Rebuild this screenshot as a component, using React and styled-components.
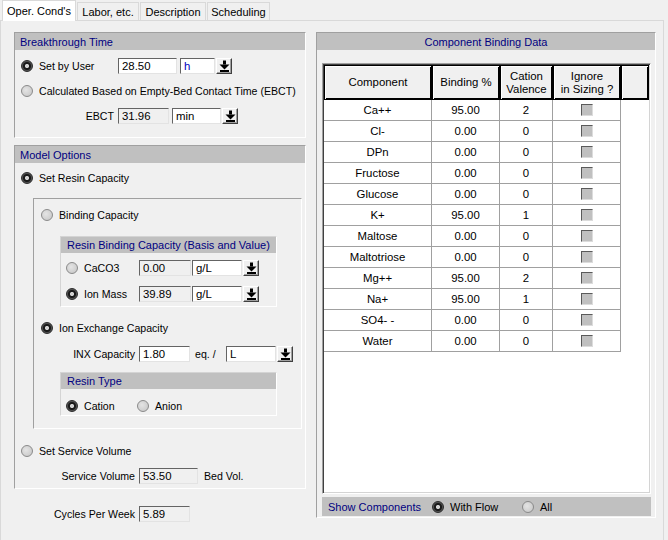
import React from "react";
import styled, { createGlobalStyle } from "styled-components";

const GlobalStyle = createGlobalStyle`
  body {
    margin: 0;
    background: #f0f0f0;
    font-family: "Liberation Sans", Arial, sans-serif;
    font-size: 10.6px;
    color: #000;
  }
`;

const Window = styled.div`
  width: 668px;
  height: 540px;
  display: flex;
  flex-direction: column;
  overflow: hidden;
`;

const TabStrip = styled.div`
  height: 20px;
  display: flex;
  align-items: flex-end;
  padding-left: 2px;
  position: relative;
  z-index: 1;
`;

const Tab = styled.div`
  width: ${(p) => p.$w}px;
  height: ${(p) => (p.$active ? 21 : 18)}px;
  margin-bottom: ${(p) => (p.$active ? -1 : 0)}px;
  margin-left: ${(p) => (p.$active ? 0 : 1)}px;
  box-sizing: border-box;
  display: flex;
  align-items: center;
  justify-content: center;
  background: ${(p) => (p.$active ? "#fff" : "#f0f0f0")};
  border: 1px solid #d9d9d9;
  border-bottom: none;
  padding-top: ${(p) => (p.$active ? 0 : 1)}px;
  font-size: 11px;
`;

const Page = styled.div`
  width: 664px;
  flex: 1;
  box-sizing: border-box;
  border: 1px solid #d9d9d9;
  border-bottom: none;
  display: flex;
  gap: 10px;
  padding: 11px 0 0 13px;
`;

const LeftCol = styled.div`
  width: 292px;
  display: flex;
  flex-direction: column;
`;

const GroupBox = styled.div`
  border: 1px solid;
  border-color: #a0a0a0 #fff #fff #a0a0a0;
  margin-top: ${(p) => p.$mt || 0}px;
  padding-bottom: ${(p) => p.$pb || 0}px;
  display: flex;
  flex-direction: column;
`;

const GroupHeader = styled.div`
  height: 17px;
  background: #c0c0c0;
  color: #000080;
  display: flex;
  align-items: center;
  padding-left: 5px;
  font-size: 11px;
`;

const GroupBody = styled.div`
  display: flex;
  flex-direction: column;
  padding-left: 6px;
`;

const InnerBox = styled.div`
  margin: 12px 3px 0 12px;
  border: 1px solid;
  border-color: #a0a0a0 #fff #fff #a0a0a0;
  padding: 8px 0 12px 7px;
  display: flex;
  flex-direction: column;
`;

const SubBox = styled.div`
  width: 217px;
  box-sizing: border-box;
  margin: ${(p) => p.$mt}px 0 0 19px;
  border: 1px solid;
  border-color: #d4d4d4 #fff #fff #d4d4d4;
  padding-bottom: ${(p) => p.$pb}px;
  display: flex;
  flex-direction: column;
`;

const SubHeader = styled.div`
  height: 16px;
  background: #c0c0c0;
  color: #000080;
  display: flex;
  align-items: center;
  padding-left: 6px;
  font-size: 11px;
`;

const SubBody = styled.div`
  display: flex;
  flex-direction: column;
  padding-left: 5px;
`;

const Row = styled.div`
  display: flex;
  align-items: center;
  height: 16px;
  margin-top: ${(p) => p.$mt || 0}px;
`;

const Radio = styled.span`
  width: 12px;
  height: 12px;
  flex: none;
  box-sizing: border-box;
  border-radius: 50%;
  margin-right: 6px;
  border: 1px solid ${(p) => (p.$checked ? "#2a2a2a" : "#8a8a8a")};
  background: ${(p) =>
    p.$checked
      ? "radial-gradient(circle, #d2d2d2 0 1.6px, #1a1a1a 2.5px 3.6px, #555 4.6px)"
      : "radial-gradient(circle at 40% 40%, #e4e4e4, #c4c4c4)"};
`;

const Text = styled.span`
  flex: none;
  white-space: nowrap;
  width: ${(p) => (p.$w ? `${p.$w}px` : "auto")};
  text-align: ${(p) => (p.$right ? "right" : "left")};
  padding-right: ${(p) => (p.$right ? 4 : 0)}px;
  margin-left: ${(p) => p.$ml || 0}px;
  box-sizing: border-box;
  color: ${(p) => p.$color || "#000"};
`;

const Field = styled.div`
  width: ${(p) => p.$w}px;
  height: 16px;
  flex: none;
  box-sizing: border-box;
  margin-left: ${(p) => p.$ml || 0}px;
  border: 1px solid;
  border-color: #646464 #e3e3e3 #e3e3e3 #646464;
  background: ${(p) => (p.$disabled ? "#f0f0f0" : "#fff")};
  color: ${(p) => p.$color || "#000"};
  padding-left: 3px;
  display: flex;
  align-items: center;
  font-size: 11.4px;
`;

const ArrowBtn = styled.div`
  width: 16px;
  height: 16px;
  flex: none;
  box-sizing: border-box;
  margin-left: 1px;
  border: 1px solid;
  border-color: #fff #404040 #404040 #fff;
  box-shadow: inset -1px -1px #a0a0a0;
  background: #f0f0f0;
  display: flex;
  align-items: center;
  justify-content: center;
`;

const RightPanel = styled.div`
  width: 340px;
  height: 486px;
  box-sizing: border-box;
  border: 1px solid;
  border-color: #a0a0a0 #fff #fff #a0a0a0;
  display: flex;
  flex-direction: column;
`;

const PanelHeader = styled(GroupHeader)`
  justify-content: center;
  padding-left: 0;
`;

const GridBox = styled.div`
  margin: 13px 4px 0 5px;
  height: 431px;
  box-sizing: border-box;
  border: 1px solid;
  border-color: #a0a0a0 #fff #fff #a0a0a0;
  box-shadow: inset 1px 1px #404040, inset -1px -1px #d4d4d4;
  background: #fff;
  padding: 1px;
  display: grid;
  grid-template-columns: 108px 68px 53px 68px 1fr;
  grid-auto-rows: 21px;
  grid-template-rows: 35px;
  align-content: start;
`;

const HeadCell = styled.div`
  box-sizing: border-box;
  background: #f0f0f0;
  border: 1px solid #000;
  box-shadow: inset 1px 1px #fff, inset -1px -1px #000;
  display: flex;
  align-items: center;
  justify-content: center;
  text-align: center;
  line-height: 13px;
  font-size: 11.4px;
`;

const Cell = styled.div`
  box-sizing: border-box;
  border-right: ${(p) => (p.$blank ? "none" : "1px solid #a0a0a0")};
  border-bottom: ${(p) => (p.$blank ? "none" : "1px solid #a0a0a0")};
  display: flex;
  align-items: center;
  justify-content: center;
  font-size: 11.4px;
`;

const CheckBox = styled.span`
  width: 12px;
  height: 12px;
  box-sizing: border-box;
  border: 1px solid;
  border-color: #5a5a5a #dcdcdc #dcdcdc #5a5a5a;
  background: #c0c0c0;
`;

const BottomBar = styled.div`
  margin: 3px 4px 0 5px;
  height: 19px;
  background: #c0c0c0;
  display: flex;
  align-items: center;
  padding-left: 6px;
  font-size: 11px;
`;

const DownArrow = () => (
  <svg width="11" height="12" viewBox="0 0 11 12">
    <rect x="4" y="0.5" width="3" height="4" fill="#000" />
    <polygon points="0.5,4.5 10.5,4.5 5.5,9.5" fill="#000" />
    <rect x="1" y="10" width="9" height="2" fill="#000" />
  </svg>
);

const Combo = ({ w, value, ml, color }) => (
  <>
    <Field $w={w} $ml={ml} $color={color}>
      {value}
    </Field>
    <ArrowBtn>
      <DownArrow />
    </ArrowBtn>
  </>
);

const components = [
  ["Ca++", "95.00", "2"],
  ["Cl-", "0.00", "0"],
  ["DPn", "0.00", "0"],
  ["Fructose", "0.00", "0"],
  ["Glucose", "0.00", "0"],
  ["K+", "95.00", "1"],
  ["Maltose", "0.00", "0"],
  ["Maltotriose", "0.00", "0"],
  ["Mg++", "95.00", "2"],
  ["Na+", "95.00", "1"],
  ["SO4- -", "0.00", "0"],
  ["Water", "0.00", "0"],
];

export default function App() {
  return (
    <Window>
      <GlobalStyle />
      <TabStrip>
        <Tab $active $w={74}>Oper. Cond's</Tab>
        <Tab $w={62}>Labor, etc.</Tab>
        <Tab $w={66}>Description</Tab>
        <Tab $w={63}>Scheduling</Tab>
      </TabStrip>
      <Page>
        <LeftCol>
          <GroupBox $pb={13}>
            <GroupHeader>Breakthrough Time</GroupHeader>
            <GroupBody>
              <Row $mt={8}>
                <Radio $checked />
                <Text $w={79}>Set by User</Text>
                <Field $w={59}>28.50</Field>
                <Combo w={35} ml={3} value="h" color="#0000c0" />
              </Row>
              <Row $mt={9}>
                <Radio />
                <Text>Calculated Based on Empty-Bed Contact Time (EBCT)</Text>
              </Row>
              <Row $mt={9}>
                <Text $w={97} $right>EBCT</Text>
                <Field $w={51} $disabled>31.96</Field>
                <Combo w={49} ml={3} value="min" />
              </Row>
            </GroupBody>
          </GroupBox>

          <GroupBox $mt={7} $pb={4}>
            <GroupHeader>Model Options</GroupHeader>
            <GroupBody>
              <Row $mt={7}>
                <Radio $checked />
                <Text>Set Resin Capacity</Text>
              </Row>
              <InnerBox>
                <Row>
                  <Radio />
                  <Text>Binding Capacity</Text>
                </Row>
                <SubBox $mt={13} $pb={4}>
                  <SubHeader>Resin Binding Capacity (Basis and Value)</SubHeader>
                  <SubBody>
                    <Row $mt={7}>
                      <Radio />
                      <Text $w={55}>CaCO3</Text>
                      <Field $w={52} $disabled>0.00</Field>
                      <Combo w={50} ml={1} value="g/L" />
                    </Row>
                    <Row $mt={10}>
                      <Radio $checked />
                      <Text $w={55}>Ion Mass</Text>
                      <Field $w={52} $disabled>39.89</Field>
                      <Combo w={50} ml={1} value="g/L" />
                    </Row>
                  </SubBody>
                </SubBox>
                <Row $mt={13}>
                  <Radio $checked />
                  <Text>Ion Exchange Capacity</Text>
                </Row>
                <Row $mt={10}>
                  <Text $w={98} $right>INX Capacity</Text>
                  <Field $w={51}>1.80</Field>
                  <Text $w={31} $ml={5}>eq. /</Text>
                  <Combo w={50} value="L" />
                </Row>
                <SubBox $mt={10} $pb={1}>
                  <SubHeader>Resin Type</SubHeader>
                  <SubBody>
                    <Row $mt={9}>
                      <Radio $checked />
                      <Text $w={53}>Cation</Text>
                      <Radio />
                      <Text>Anion</Text>
                    </Row>
                  </SubBody>
                </SubBox>
              </InnerBox>
              <Row $mt={14}>
                <Radio />
                <Text>Set Service Volume</Text>
              </Row>
              <Row $mt={9}>
                <Text $w={118} $right>Service Volume</Text>
                <Field $w={59} $disabled>53.50</Field>
                <Text $ml={6}>Bed Vol.</Text>
              </Row>
            </GroupBody>
          </GroupBox>

          <Row $mt={17}>
            <Text $w={125} $right>Cycles Per Week</Text>
            <Field $w={51} $disabled>5.89</Field>
          </Row>
        </LeftCol>

        <RightPanel>
          <PanelHeader>Component Binding Data</PanelHeader>
          <GridBox>
            <HeadCell>Component</HeadCell>
            <HeadCell>Binding %</HeadCell>
            <HeadCell>
              Cation
              <br />
              Valence
            </HeadCell>
            <HeadCell>
              Ignore
              <br />
              in Sizing ?
            </HeadCell>
            <HeadCell />
            {components.map(([name, binding, valence]) => (
              <React.Fragment key={name}>
                <Cell>{name}</Cell>
                <Cell>{binding}</Cell>
                <Cell>{valence}</Cell>
                <Cell>
                  <CheckBox />
                </Cell>
                <Cell $blank />
              </React.Fragment>
            ))}
          </GridBox>
          <BottomBar>
            <Text $w={104} $color="#000080">Show Components</Text>
            <Radio $checked />
            <Text $w={72}>With Flow</Text>
            <Radio />
            <Text>All</Text>
          </BottomBar>
        </RightPanel>
      </Page>
    </Window>
  );
}
